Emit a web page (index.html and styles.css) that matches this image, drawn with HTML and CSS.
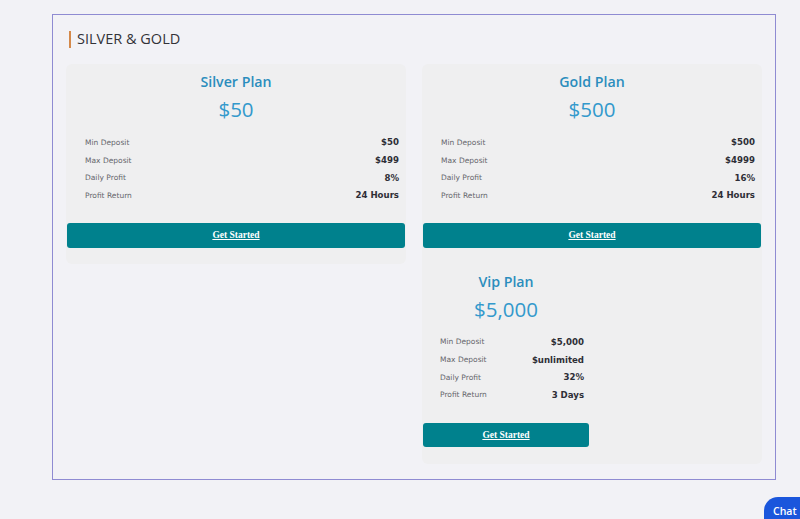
FILE: index.html
```html
<!DOCTYPE html>
<html>
<head>
<meta charset="utf-8">
<link rel="stylesheet" href="styles.css">
</head>
<body>
<div class="wrap">
  <h2 class="heading"><span class="heading-text">SILVER &amp; GOLD</span></h2>
  <div class="plans">
    <div class="col">
      <div class="card">
        <div class="plan-name">Silver Plan</div>
        <div class="price">$50</div>
        <div class="rows">
          <div class="row"><span class="label">Min Deposit</span><span class="value">$50</span></div>
          <div class="row"><span class="label">Max Deposit</span><span class="value">$499</span></div>
          <div class="row"><span class="label">Daily Profit</span><span class="value">8%</span></div>
          <div class="row"><span class="label">Profit Return</span><span class="value">24 Hours</span></div>
        </div>
        <a class="btn" href="#">Get Started</a>
      </div>
    </div>
    <div class="col">
      <div class="card">
        <div class="plan-name">Gold Plan</div>
        <div class="price">$500</div>
        <div class="rows">
          <div class="row"><span class="label">Min Deposit</span><span class="value">$500</span></div>
          <div class="row"><span class="label">Max Deposit</span><span class="value">$4999</span></div>
          <div class="row"><span class="label">Daily Profit</span><span class="value">16%</span></div>
          <div class="row"><span class="label">Profit Return</span><span class="value">24 Hours</span></div>
        </div>
        <a class="btn" href="#">Get Started</a>
      </div>
      <div class="card">
        <div class="vip-inner">
          <div class="plan-name">Vip Plan</div>
          <div class="price">$5,000</div>
          <div class="rows rows-vip">
            <div class="row"><span class="label">Min Deposit</span><span class="value">$5,000</span></div>
            <div class="row"><span class="label">Max Deposit</span><span class="value">$unlimited</span></div>
            <div class="row"><span class="label">Daily Profit</span><span class="value">32%</span></div>
            <div class="row"><span class="label">Profit Return</span><span class="value">3 Days</span></div>
          </div>
          <a class="btn" href="#">Get Started</a>
        </div>
      </div>
    </div>
  </div>
</div>
<div class="chat">Chat</div>
</body>
</html>
```
FILE: styles.css
```css
html, body {
  margin: 0;
  padding: 0;
  background: #f2f2f6;
}
body {
  font-family: "Open Sans", "Noto Sans", sans-serif;
  height: 519px;
  overflow: hidden;
}
.wrap {
  margin: 14px 0 0 52px;
  width: 722px;
  height: 464px;
  border: 1px solid #8f8bd2;
  box-sizing: content-box;
}
.heading {
  margin: 16px 0 0 16px;
  font-size: 14.5px;
  font-weight: 400;
  line-height: 15px;
  color: #333338;
}
.heading-text {
  display: inline-block;
  border-left: 2px solid #d4894a;
  padding: 0 0 2px 6px;
}
.plans {
  display: grid;
  grid-template-columns: 340px 340px;
  column-gap: 16px;
  padding: 0 13px;
  margin-top: 16px;
  align-items: start;
}
.col {
  display: flex;
  flex-direction: column;
}
.card {
  background: #efeff0;
  border-radius: 6px;
  padding: 8px 1px 16px;
  height: 199.5px;
  box-sizing: border-box;
}
.col .card + .card {
  height: 200.5px;
  border-radius: 0 0 6px 6px;
}
.col .card:first-child:not(:last-child) {
  border-radius: 6px 6px 0 0;
}
.vip-inner {
  width: 166px;
}
.plan-name {
  text-align: center;
  font-size: 14.2px;
  font-weight: 600;
  line-height: 20px;
  color: #2b8dbd;
}
.price {
  margin-top: 3px;
  text-align: center;
  font-size: 20.5px;
  line-height: 28px;
  color: #3399cc;
}
.rows {
  margin-top: 10.7px;
  padding: 0 6px 0 18px;
}
.rows-vip {
  padding: 0 5px 0 17px;
}
.row {
  display: flex;
  justify-content: space-between;
  align-items: center;
  height: 17.6px;
}
.label {
  font-family: "DejaVu Sans", Verdana, sans-serif;
  font-size: 7.5px;
  color: #66666c;
}
.value {
  font-family: "DejaVu Sans", Verdana, sans-serif;
  font-size: 8.6px;
  font-weight: 700;
  color: #2e2e36;
}
.btn {
  display: flex;
  align-items: center;
  justify-content: center;
  margin-top: 19px;
  height: 24.6px;
  background: #00818d;
  border-radius: 3px;
  color: #ffffff;
  font-family: "Liberation Serif", "Times New Roman", serif;
  font-weight: 700;
  font-size: 9.5px;
  text-decoration: underline;
}
.chat {
  position: fixed;
  left: 764px;
  top: 497px;
  width: 60px;
  height: 40px;
  box-sizing: border-box;
  padding: 6px 0 0 9px;
  background: #1a56dc;
  border-radius: 14px 0 0 0;
  color: #ffffff;
  font-size: 10.5px;
  font-weight: 600;
  line-height: 16px;
}
```
